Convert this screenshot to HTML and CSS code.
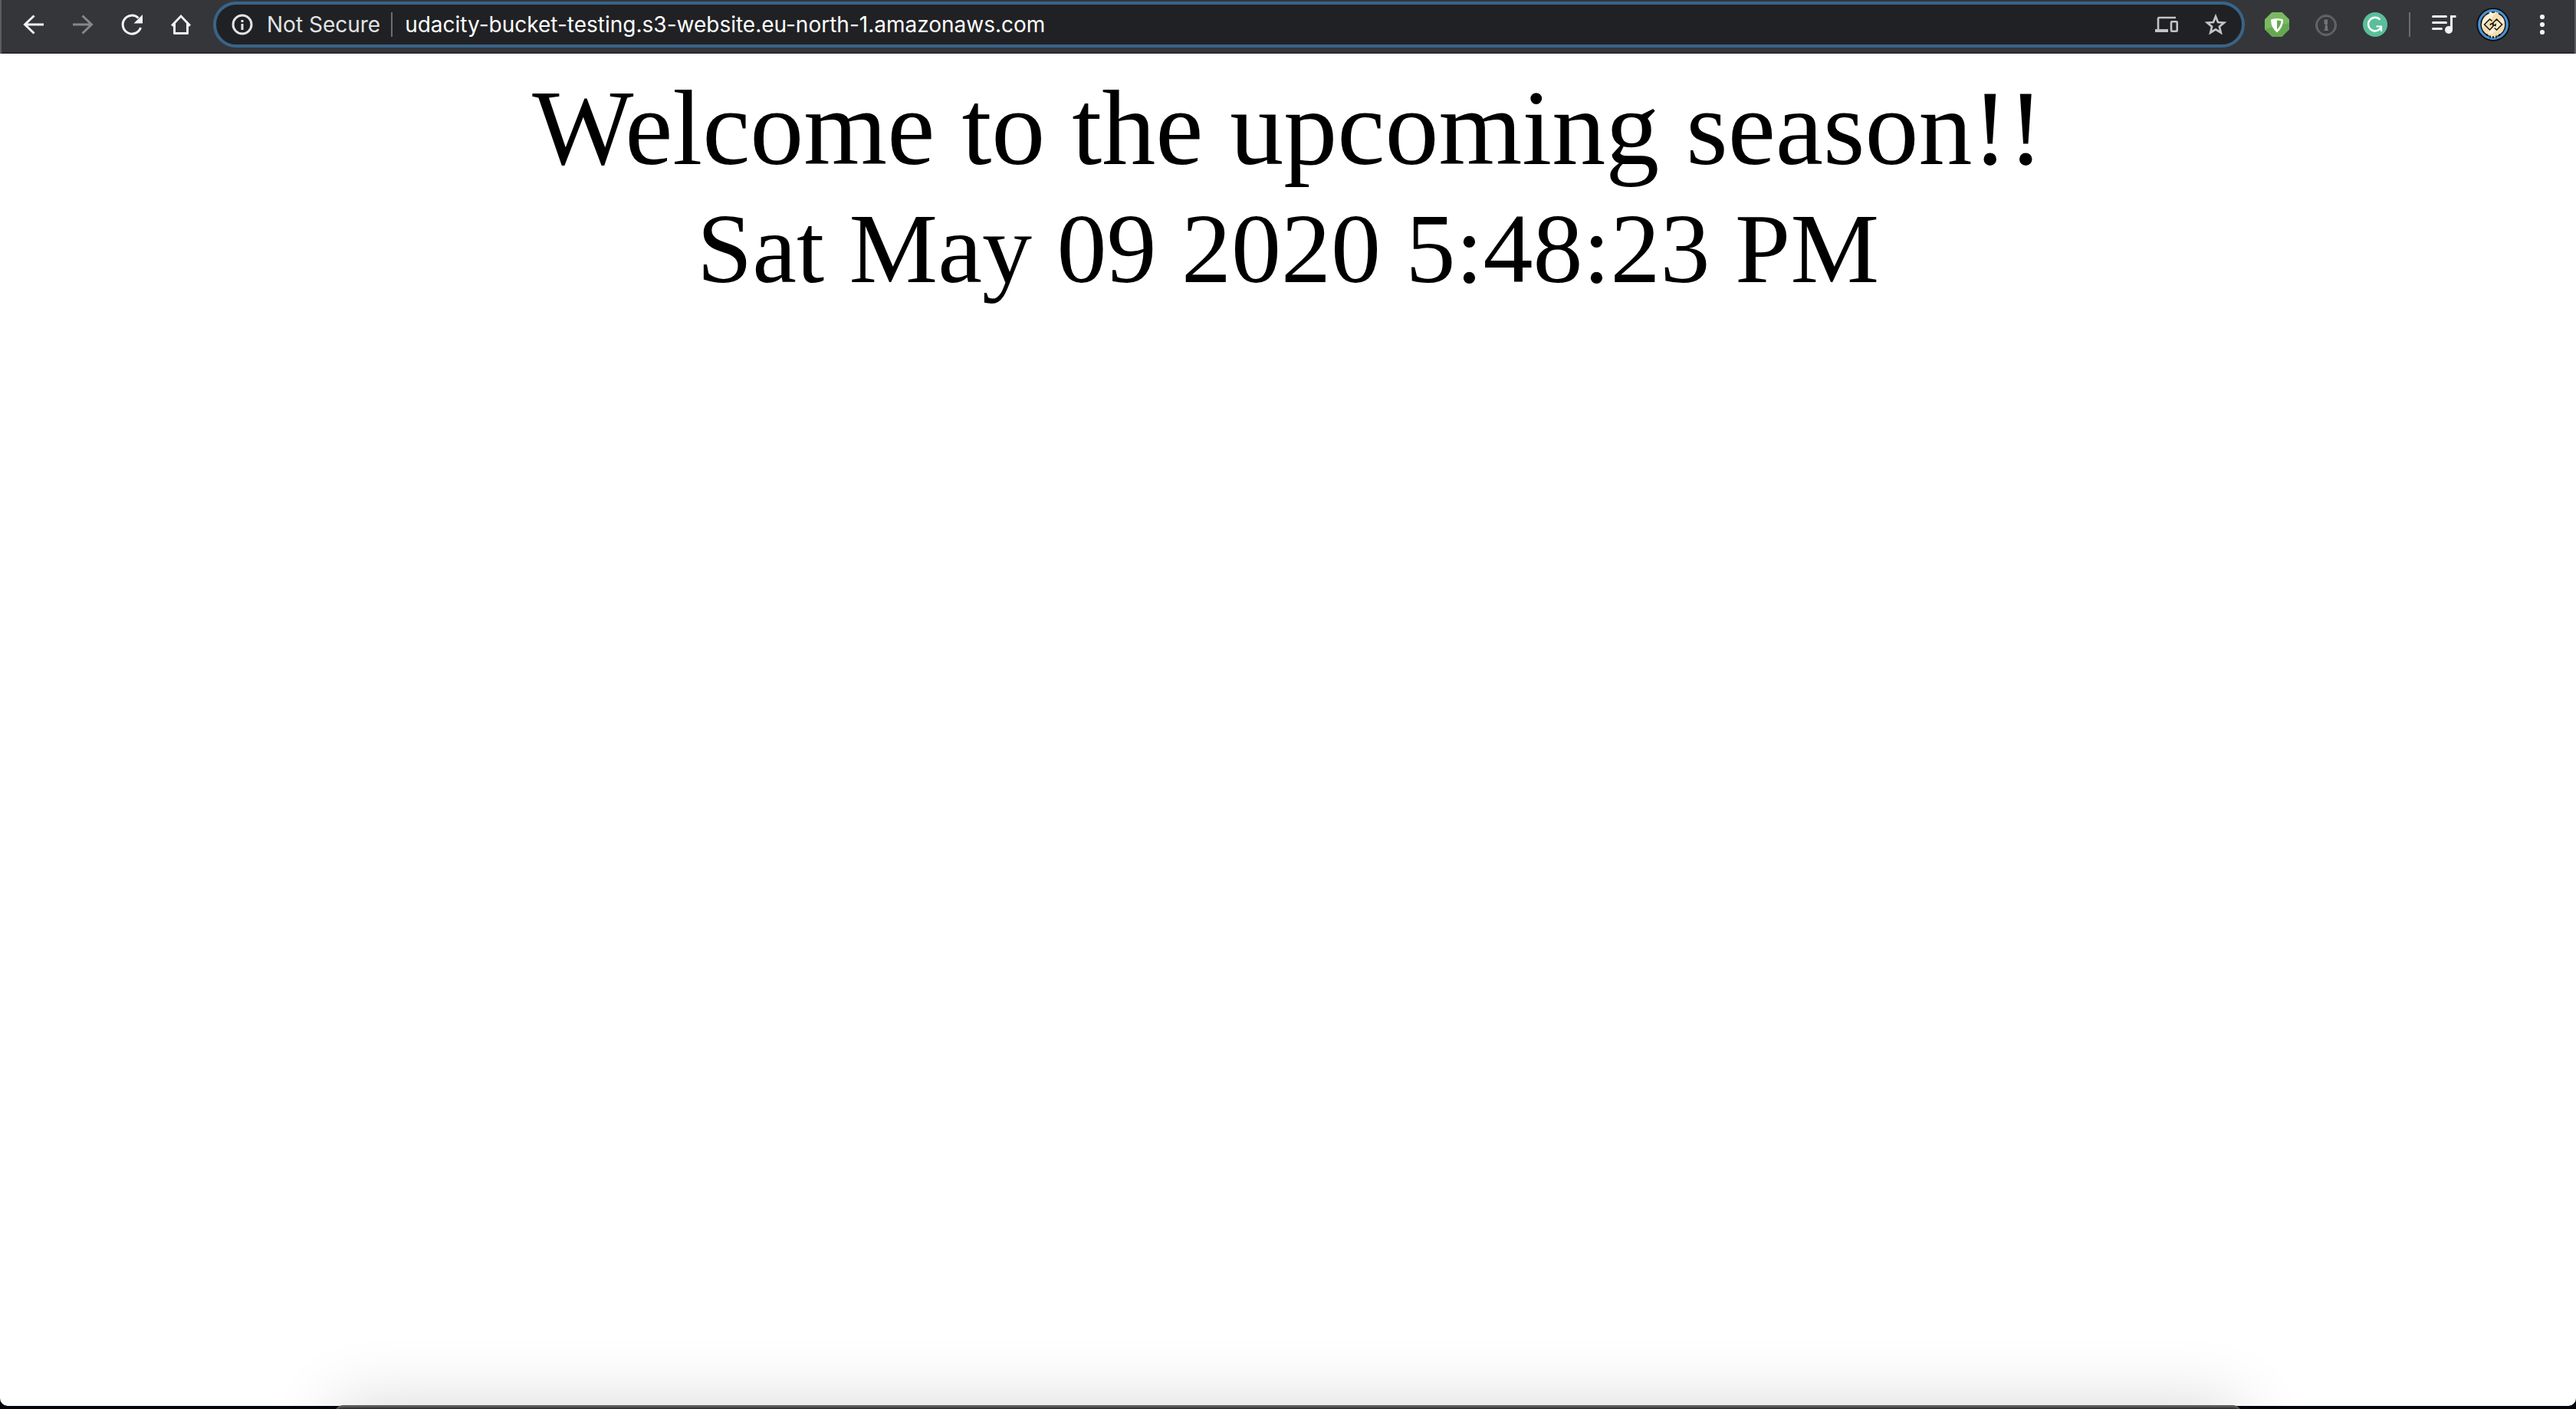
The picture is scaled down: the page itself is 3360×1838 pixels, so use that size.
FILE: index.html
```html
<!DOCTYPE html>
<html lang="en">
<head>
<meta charset="utf-8">
<title>udacity-bucket-testing</title>
<link rel="stylesheet" href="styles.css">
</head>
<body>
<div class="desktop">
<div class="window">
  <header class="toolbar">
    <nav class="group" aria-label="Navigation">
      <button class="tool" aria-label="Back"><svg class="icon" viewBox="0 0 32 32"><path d="M29 16H5M16.500 4.500L4.500 16L16.500 27.500" fill="none" stroke="#f1f3f4" stroke-width="3"/></svg></button>
      <button class="tool" aria-label="Forward" disabled><svg class="icon" viewBox="0 0 32 32"><path d="M3 16H27M15.500 4.500L27.500 16L15.500 27.500" fill="none" stroke="#86878a" stroke-width="3"/></svg></button>
      <button class="tool" aria-label="Reload"><svg class="icon" viewBox="0 0 32 32"><path d="M27.500 20A12 12 0 1 1 24.500 7.500" fill="none" stroke="#f1f3f4" stroke-width="3"/><path d="M30 3V14.500H18.500Z" fill="#f1f3f4"/></svg></button>
      <button class="tool" aria-label="Home"><svg class="icon" viewBox="0 0 32 32"><path d="M16 3L29 16.500L27 18.500H26V27.500Q26 29 24.500 29H7.500Q6 29 6 27.500V18.500H5L3 16.500ZM16 7L9 14.500V26H23V14.500Z" fill="#f1f3f4" fill-rule="evenodd"/></svg></button>
    </nav>
    <form class="address">
      <svg class="icon" viewBox="0 0 32 32"><circle cx="16" cy="16" r="12" fill="none" stroke="#e2e3e4" stroke-width="3"/><path d="M14.500 10h3v3h-3zM14.500 15h3v8h-3z" fill="#e2e3e4"/></svg>
      <label class="security" for="url">Not Secure</label>
      <span class="divider"></span>
      <input class="url" id="url" type="text" value="udacity-bucket-testing.s3-website.eu-north-1.amazonaws.com">
      <button class="inner" type="button" aria-label="Send to your devices"><svg class="icon" viewBox="0 0 32 32"><path d="M28 7H6.500Q5 7 5 8.500V23" fill="none" stroke="#c2c3c5" stroke-width="2.600"/><path d="M1 22H18V26H1Z" fill="#c2c3c5"/><rect x="22" y="12.200" width="7.700" height="12.500" rx="1" fill="none" stroke="#c2c3c5" stroke-width="2.600"/></svg></button>
      <button class="inner" type="button" aria-label="Bookmark this page"><svg class="icon" viewBox="0 0 32 32"><path d="M16 5.500L19 13L27 13.600L20.900 18.700L22.800 26.500L16 22.300L9.200 26.500L11.100 18.700L5 13.600L13 13Z" fill="none" stroke="#c2c3c5" stroke-width="2.700"/></svg></button>
    </form>
    <div class="group">
      <button class="tool" aria-label="Privacy shield"><svg class="icon" viewBox="0 0 32 32"><path d="M9.500 0H22.500L32 9.500V22.500L22.500 32H9.500L0 22.500V9.500Z" fill="#66a852"/><path d="M9.500 0H22.500L32 9.500V14L0 22V9.500Z" fill="#78b962"/><path d="M8 9.500Q16 6.500 24 9.500Q24 20 16 26.500Q8 20 8 9.500Z" fill="#fff"/><path d="M16 10.500Q19 10.500 21.500 11.300Q21 18 16 22.500Z" fill="#66a852"/></svg></button>
      <button class="tool" aria-label="Password manager"><svg class="icon" viewBox="0 0 32 32"><circle cx="16" cy="17" r="13.500" fill="#303134" stroke="#747474" stroke-width="1"/><circle cx="16" cy="17" r="11.800" fill="#38393c" stroke="#77787a" stroke-width="1.300"/><path d="M13.500 9.500H18V15L17 16.500L18 18V22.500H19V24H13.500V22.500H14.500V18L15.500 16.500L13.500 15Z" fill="#737476"/></svg></button>
      <button class="tool" aria-label="Writing assistant"><svg class="icon" viewBox="0 0 32 32"><circle cx="16" cy="16" r="16" fill="#5abf9a"/><path d="M22.500 9.800A8.800 8.800 0 1 0 24 19" fill="none" stroke="#fff" stroke-width="2.400"/><path d="M17.500 18.500H24V25" fill="none" stroke="#fff" stroke-width="2.200"/></svg></button>
    </div>
    <span class="divider"></span>
    <div class="group">
      <button class="tool" aria-label="Media controls"><svg class="icon" viewBox="0 0 32 32"><path d="M1.500 5.500H18.500M1.500 13.500H18.500M1.500 21.500H12.500" stroke="#f1f3f4" stroke-width="3" stroke-linecap="round"/><path d="M24 4H31.500V7H27V23H24Z" fill="#f1f3f4"/><circle cx="22" cy="23" r="5" fill="#f1f3f4"/></svg></button>
      <button class="tool" aria-label="Profile"><svg class="avatar" viewBox="0 0 44 44"><circle cx="22" cy="22" r="20.800" fill="#4a91d6" stroke="#0b0d10" stroke-width="1.800"/><circle cx="22" cy="22" r="16.500" fill="#f3deae"/><path d="M8 16L19 6H26L7 27ZM15 33L35 13L37 17L20 35Z" fill="#fbf0d8"/><path d="M16.600 37.200A16.200 16.200 0 0 1 16.600 6.800M27.400 37.200A16.200 16.200 0 0 0 29 7.500M20 6H24" fill="none" stroke="#0b0d10" stroke-width="1.500"/><path d="M18.500 23V21.500L22 20V24L17.500 29L10.500 22L17.500 15L20.500 17.500M25 21V23.500L21.500 22.500V20L26.500 15L33.500 22L26.500 29L23.500 26.500" fill="none" stroke="#17150f" stroke-width="1.500"/><path d="M14 34.500v2.500M18 36.500v3M22 37v3M26 36.500v3M30 34.500v2.500" stroke="#0b0d10" stroke-width="1.600"/></svg></button>
      <button class="tool" aria-label="Menu"><svg class="icon" viewBox="0 0 32 32"><g fill="#f1f3f4"><circle cx="16" cy="6" r="3.100"/><circle cx="16" cy="16" r="3.100"/><circle cx="16" cy="26" r="3.100"/></g></svg></button>
    </div>
  </header>
  <main class="page">
    <div class="welcome">Welcome to the upcoming season!!</div>
    <div class="date">Sat May 09 2020 5:48:23 PM</div>
  </main>
</div>
<div class="dock"></div>
</div>
</body>
</html>
```
FILE: styles.css
```css
* {
  box-sizing: border-box;
}

body {
  margin: 0;
}

.desktop {
  position: relative;
  display: flex;
  flex-direction: column;
  min-height: 100vh;
  padding-bottom: 4px;
  overflow: hidden;
  background: #02060d;
}

.window {
  flex: 1;
  display: flex;
  flex-direction: column;
  background: #fff;
  border-radius: 0 0 10px 10px;
  overflow: hidden;
}

.toolbar {
  display: flex;
  align-items: center;
  padding: 2px 10px 8px;
  background: #35363a;
  border: solid #5c5d60;
  border-width: 0 2px;
  box-shadow: inset 0 -2px #28292b;
}

.group {
  display: flex;
}

.tool,
.inner {
  display: flex;
  align-items: center;
  justify-content: center;
  width: 64px;
  height: 60px;
  padding: 0;
  border: 0;
  background: none;
}

.inner {
  height: 52px;
}

.icon {
  display: block;
  flex: none;
  width: 32px;
  height: 32px;
}

.avatar {
  flex: none;
  width: 44px;
  height: 44px;
}

.address {
  flex: 1;
  display: flex;
  align-items: center;
  min-width: 0;
  height: 60px;
  margin: 0 10px;
  padding: 0 2px 0 18px;
  border: 4px solid #386488;
  border-radius: 30px;
  background: #202124;
  font-family: Inter, "Liberation Sans", sans-serif;
  font-size: 28px;
  line-height: 32px;
}

.security {
  margin: 0 14px 0 16px;
  color: #e2e3e4;
}

.divider {
  flex: none;
  width: 2px;
  height: 32px;
  margin: 0 12px;
  background: #6c6d70;
}

.address .divider {
  margin: 0 16px 0 0;
}

.url {
  flex: 1;
  min-width: 0;
  padding: 0;
  border: 0;
  outline: 0;
  background: none;
  color: #fff;
  font: inherit;
}

.page {
  padding-top: 17px;
  text-align: center;
  color: #000;
  font-family: "Liberation Serif", "Times New Roman", serif;
}

.welcome {
  font-size: 140px;
  line-height: 160px;
}

.date {
  font-size: 130px;
  line-height: 154px;
}

/* Top edge of the desktop dock, with the shadow it casts over the window */
.dock {
  position: absolute;
  left: 13%;
  right: 13%;
  bottom: -195px;
  height: 200px;
  border-top: 3px solid #5a5a5a;
  border-radius: 10px;
  background: #343434;
  box-shadow: 0 0 90px rgba(0, 0, 0, 0.16);
}
```
